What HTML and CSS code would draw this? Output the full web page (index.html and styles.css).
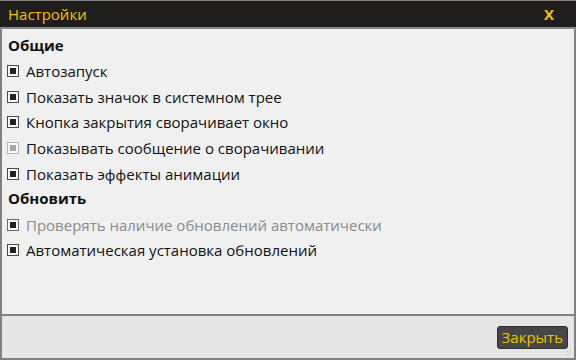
FILE: index.html
```html
<!DOCTYPE html>
<html>
<head>
	<title>Настройки</title>
	<link rel="stylesheet" href="styles.css">
</head>
<body>
<div class="window">
	<div class="titlebar">
		<span class="title">Настройки</span>
		<span class="close">X</span>
	</div>
	<div class="content">
		<div class="group">Общие</div>
		<div class="option"><span class="box"></span>Автозапуск</div>
		<div class="option"><span class="box"></span>Показать значок в системном трее</div>
		<div class="option"><span class="box"></span>Кнопка закрытия сворачивает окно</div>
		<div class="option"><span class="box off"></span>Показывать сообщение о сворачивании</div>
		<div class="option"><span class="box"></span>Показать эффекты анимации</div>
		<div class="group">Обновить</div>
		<div class="option muted"><span class="box"></span>Проверять наличие обновлений автоматически</div>
		<div class="option"><span class="box"></span>Автоматическая установка обновлений</div>
	</div>
	<div class="footer">
		<button class="btn">Закрыть</button>
		<span class="grip"></span>
	</div>
</div>
</body>
</html>
```

FILE: styles.css
```css
body{
	margin: 0;
	font-family: "Open Sans", "Noto Sans", sans-serif;
	font-size: 15px;
}
.window{
	width: 576px;
	height: 360px;
	box-sizing: border-box;
	display: flex;
	flex-direction: column;
	background: #f0f0f0;
	border-top: 1px solid #7f7f7f;
}
.titlebar{
	height: 26px;
	background: #201d1d;
	border-bottom: 2px solid #868686;
	display: flex;
	align-items: center;
	justify-content: space-between;
	padding: 0 22px 0 8px;
	color: #f2c200;
}
.title{
	font-size: 15px;
}
.close{
	font-size: 15px;
	font-weight: bold;
	font-family: "Open Sans", sans-serif;
}
.content{
	flex: 1;
	padding: 4px 0 0 5px;
	border-left: 2px solid #808080;
	border-right: 2px solid #808080;
	border-bottom: 2px solid #808080;
	color: #111;
}
.group{
	font-weight: bold;
	height: 25.5px;
	line-height: 25.5px;
	padding-left: 1px;
}
.option{
	height: 25.6px;
	display: flex;
	align-items: center;
	gap: 7px;
}
.option.muted{
	color: #8a8a8a;
}
.box{
	width: 10px;
	height: 10px;
	border: 1px solid #4a4a4a;
	background: #fafafa;
	display: flex;
	align-items: center;
	justify-content: center;
}
.box::after{
	content: "";
	width: 6px;
	height: 6px;
	background: #222;
}
.box.off{
	border-color: #b5b5b5;
}
.box.off::after{
	background: #a8a8a8;
}
.option.muted .box{
	border-color: #6a6a6a;
}
.footer{
	height: 42px;
	background: #e6e6e6;
	border-left: 2px solid #808080;
	border-right: 2px solid #808080;
	border-bottom: 2px solid #808080;
	display: flex;
	align-items: center;
	justify-content: flex-end;
	padding-right: 6px;
	position: relative;
}
.btn{
	background: #464646;
	color: #f2c200;
	border: 1px solid #2e2e2e;
	border-radius: 3px;
	font-family: inherit;
	font-size: 15px;
	padding: 0 4px 1px;
	height: 23px;
	margin-top: 1px;
}
.grip{
	position: absolute;
	right: 1px;
	bottom: 1px;
	width: 7px;
	height: 7px;
	background:
		radial-gradient(circle, #b8b8b8 1px, transparent 1px) 0 0 / 3px 3px;
}
```
